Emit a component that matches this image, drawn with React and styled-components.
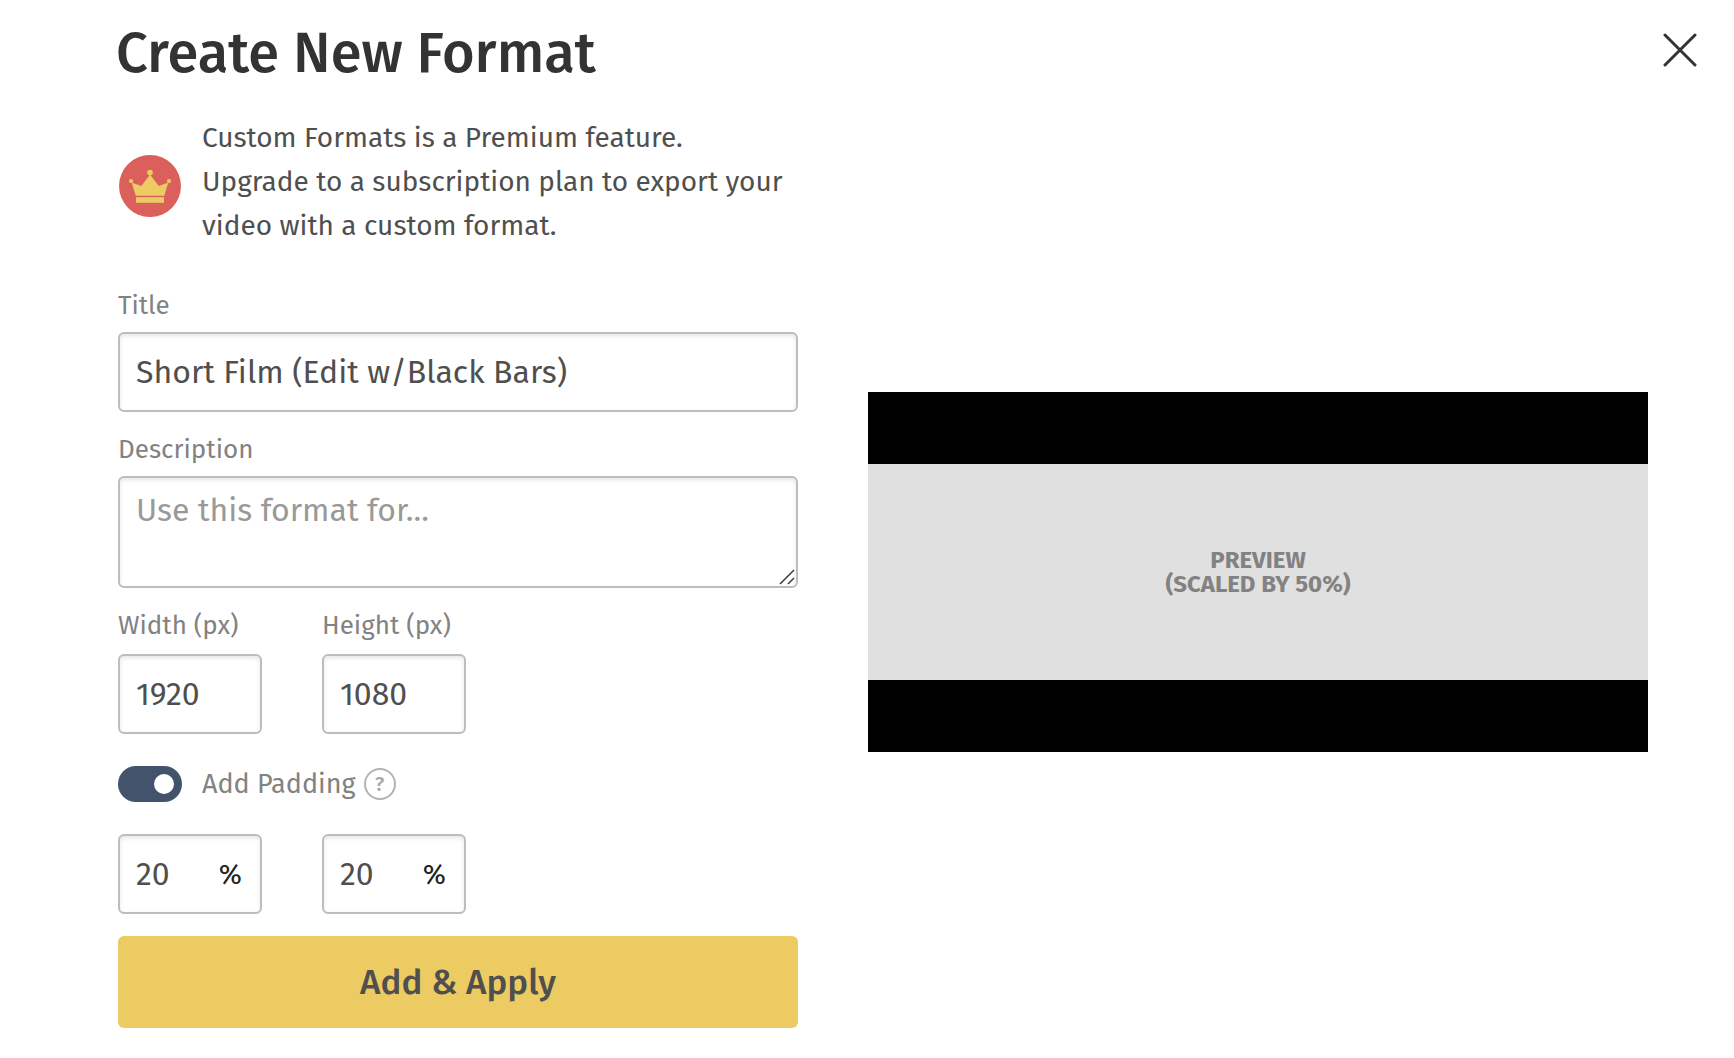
import { useState } from 'react';

import styled, { createGlobalStyle } from 'styled-components';

const App = () => {
  const [title, setTitle] = useState('Short Film (Edit w/Black Bars)');
  const [description, setDescription] = useState('');
  const [width, setWidth] = useState('1920');
  const [height, setHeight] = useState('1080');
  const [padded, setPadded] = useState(true);
  const [padX, setPadX] = useState('20');
  const [padY, setPadY] = useState('20');

  return (
    <>
      <GlobalStyle />
      <Header>
        <h1>Create New Format</h1>
        <CloseButton type='button' aria-label='Close'>
          <svg width='34' height='34' viewBox='0 0 34 34'>
            <path d='M2 2L32 32M32 2L2 32' />
          </svg>
        </CloseButton>
      </Header>
      <Body>
        <form onSubmit={(e) => e.preventDefault()}>
          <Notice>
            <Crown />
            <p>
              Custom Formats is a Premium feature.
              <br />
              Upgrade to a subscription plan to export your
              <br />
              video with a custom format.
            </p>
          </Notice>
          <Field>
            <label htmlFor='title'>Title</label>
            <InputBox>
              <input
                id='title'
                value={title}
                onChange={(e) => setTitle(e.target.value)}
              />
            </InputBox>
          </Field>
          <Field>
            <label htmlFor='description'>Description</label>
            <TextBox>
              <textarea
                id='description'
                placeholder='Use this format for...'
                value={description}
                onChange={(e) => setDescription(e.target.value)}
              />
              <svg width='16' height='16' viewBox='0 0 16 16'>
                <path d='M1 15L15 1M9 15L15 9' />
              </svg>
            </TextBox>
          </Field>
          <Pair>
            <Field $gap={10}>
              <label htmlFor='width'>Width (px)</label>
              <InputBox>
                <input
                  id='width'
                  value={width}
                  onChange={(e) => setWidth(e.target.value)}
                />
              </InputBox>
            </Field>
            <Field $gap={10}>
              <label htmlFor='height'>Height (px)</label>
              <InputBox>
                <input
                  id='height'
                  value={height}
                  onChange={(e) => setHeight(e.target.value)}
                />
              </InputBox>
            </Field>
          </Pair>
          <ToggleRow>
            <Toggle
              id='padding'
              type='checkbox'
              checked={padded}
              onChange={(e) => setPadded(e.target.checked)}
            />
            <label htmlFor='padding'>Add Padding</label>
            <HelpButton type='button' aria-label='About padding'>
              ?
            </HelpButton>
          </ToggleRow>
          <Pair>
            <InputBox>
              <input
                aria-label='Horizontal padding'
                value={padX}
                onChange={(e) => setPadX(e.target.value)}
              />
              <span>%</span>
            </InputBox>
            <InputBox>
              <input
                aria-label='Vertical padding'
                value={padY}
                onChange={(e) => setPadY(e.target.value)}
              />
              <span>%</span>
            </InputBox>
          </Pair>
          <SubmitButton type='submit'>Add &amp; Apply</SubmitButton>
        </form>
        <Preview>
          <div>
            PREVIEW
            <br />
            (SCALED BY 50%)
          </div>
        </Preview>
      </Body>
    </>
  );
};

const Crown = () => (
  <svg width='64' height='64' viewBox='-1 -1 64 64' aria-hidden='true'>
    <circle cx='31' cy='31' r='31' fill='#db605c' />
    <g fill='#ebcb62'>
      <circle cx='31' cy='17.5' r='2.8' />
      <circle cx='12' cy='26' r='2.1' />
      <circle cx='50' cy='26' r='2.1' />
      <path d='M12.6 27.6L22.3 31L31 19.5L39.7 31L49.4 27.6L45.2 40.8H16.8Z' />
      <path d='M17 42.2H45V47.8H17Z' />
    </g>
  </svg>
);

const GlobalStyle = createGlobalStyle`
  * {
    box-sizing: border-box;
    margin: 0;
    padding: 0;
  }

  body {
    background: #fff;
    color: #4f4f4f;
  }

  body, button, input, textarea {
    font-family: 'Fira Sans', 'Noto Sans', sans-serif;
  }
`;

const Header = styled.header`
  display: flex;
  justify-content: space-between;
  align-items: flex-start;
  padding: 22px 37px 0 116px;
  height: 116px;

  h1 {
    font-size: 56px;
    line-height: 64px;
    font-weight: 500;
    color: #333;
  }
`;

const CloseButton = styled.button`
  margin-top: 11px;
  border: none;
  background: none;
  cursor: pointer;

  svg {
    display: block;
    stroke: #333;
    stroke-width: 3;
    stroke-linecap: round;
  }
`;

const Body = styled.main`
  display: grid;
  grid-template-columns: 680fr 780fr;
  gap: 70px;
  align-items: center;
  padding: 0 86px 30px 118px;
`;

const Notice = styled.div`
  display: flex;
  align-items: center;
  gap: 20px;
  margin-bottom: 40px;

  svg {
    flex: none;
    margin-top: 8px;
  }

  p {
    font-size: 28px;
    line-height: 44px;
  }
`;

const Field = styled.div`
  display: flex;
  flex-direction: column;
  gap: ${({ $gap = 8 }) => $gap}px;
  margin-bottom: 20px;

  label {
    font-size: 26px;
    line-height: 36px;
    color: #828282;
  }
`;

const InputBox = styled.div`
  display: flex;
  align-items: center;
  height: 80px;
  padding: 0 18px 0 16px;
  border: 2px solid #bdbdbd;
  border-radius: 6px;
  box-shadow: inset 0 2px 4px rgba(0, 0, 0, 0.1);

  input {
    flex: 1;
    min-width: 0;
    width: 100%;
    border: none;
    outline: none;
    background: none;
    font-size: 32px;
    color: #4f4f4f;
  }

  span {
    font-size: 28px;
    color: #222;
  }
`;

const TextBox = styled.div`
  position: relative;

  textarea {
    display: block;
    width: 100%;
    height: 112px;
    padding: 12px 16px;
    border: 2px solid #bdbdbd;
    border-radius: 6px;
    box-shadow: inset 0 2px 4px rgba(0, 0, 0, 0.1);
    outline: none;
    resize: none;
    font-size: 32px;
    line-height: 40px;
    color: #4f4f4f;
  }

  textarea::placeholder {
    color: #999;
  }

  svg {
    position: absolute;
    right: 3px;
    bottom: 3px;
    stroke: #444;
    stroke-width: 1.6;
    pointer-events: none;
  }
`;

const Pair = styled.div`
  display: grid;
  grid-template-columns: 144px 144px;
  gap: 60px;

  ${Field} {
    margin-bottom: 0;
  }
`;

const ToggleRow = styled.div`
  display: flex;
  align-items: center;
  height: 36px;
  margin: 32px 0;

  label {
    margin: 0 8px 0 20px;
    font-size: 27px;
    line-height: 36px;
    color: #828282;
  }
`;

const Toggle = styled.input`
  appearance: none;
  display: flex;
  align-items: center;
  justify-content: ${({ checked }) => (checked ? 'flex-end' : 'flex-start')};
  width: 64px;
  height: 36px;
  padding: 0 8px;
  border-radius: 18px;
  background: ${({ checked }) => (checked ? '#44536c' : '#bdbdbd')};
  cursor: pointer;

  &::before {
    content: '';
    width: 20px;
    height: 20px;
    border-radius: 50%;
    background: #fff;
  }
`;

const HelpButton = styled.button`
  width: 32px;
  height: 32px;
  border: 2px solid #b3b3b3;
  border-radius: 50%;
  background: none;
  font-size: 20px;
  line-height: 28px;
  font-weight: 500;
  color: #a6a6a6;
  cursor: pointer;
`;

const SubmitButton = styled.button`
  display: block;
  width: 100%;
  height: 92px;
  margin-top: 22px;
  border: none;
  border-radius: 6px;
  background: #ebcb62;
  font-size: 35px;
  font-weight: 500;
  color: #4f4f4f;
  cursor: pointer;
`;

const Preview = styled.section`
  padding: 72px 0;
  background: #000;

  div {
    display: flex;
    align-items: center;
    justify-content: center;
    height: 216px;
    background: #e0e0e0;
    font-size: 24px;
    line-height: 24px;
    font-weight: 700;
    text-align: center;
    color: #828282;
  }
`;

export default App;
